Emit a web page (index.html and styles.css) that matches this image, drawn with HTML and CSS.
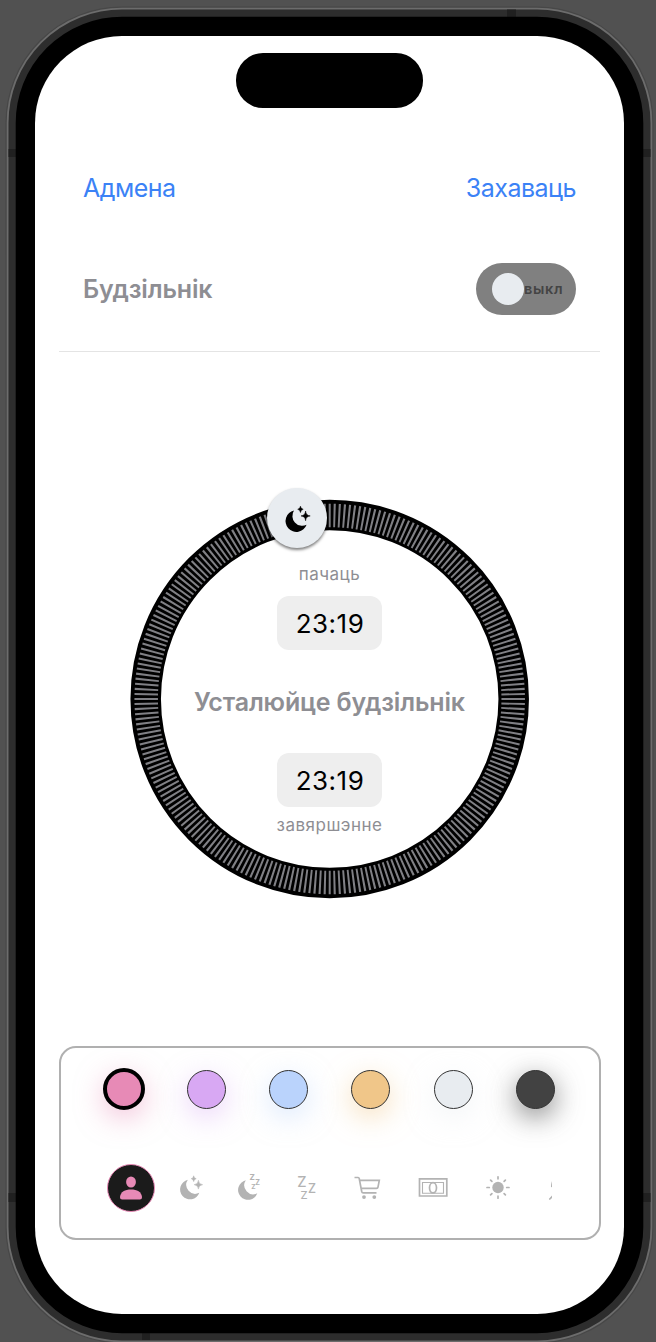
FILE: index.html
```html
<!DOCTYPE html>
<html lang="be">
<head>
<meta charset="utf-8">
<title>Будзільнік</title>
<link rel="stylesheet" href="styles.css">
</head>
<body>
<svg class="device" viewBox="0 0 656 1342" aria-hidden="true">
  <defs>
    <rect id="frame" x="35" y="36" width="589" height="1278" rx="87"/>
  </defs>
  <use href="#frame" stroke="#474747" stroke-width="59"/>
  <use href="#frame" stroke="#6c6c6c" stroke-width="56.600"/>
  <use href="#frame" stroke="#2d2d2d" stroke-width="53"/>
  <path fill="#202020" d="M8.500 149h8v8h-8zM8.500 1193h8v9h-8zM642 149h8.500v8H642zM642 1193h8.500v9H642zM507 9.500h9v8h-9zM142 1331h8v9h-8z"/>
  <use href="#frame" stroke="#000" stroke-width="38.600"/>
  <use href="#frame" fill="#fff"/>
</svg>

<main class="screen">
  <div class="island"></div>
  <header class="nav">
    <a class="nav-cancel">Адмена</a>
    <a class="nav-save">Захаваць</a>
  </header>
  <section class="alarm">
    <h1 class="alarm-title">Будзільнік</h1>
    <div class="toggle"><span class="toggle-knob"></span><span class="toggle-text">выкл</span></div>
  </section>

  <section class="dial">
    <svg class="ring" viewBox="-199 -199 398 398" aria-hidden="true">
      <circle cx="-.3" r="184" fill="none" stroke="#000" stroke-width="30.500"/>
      <circle cx="-.3" r="183.500" fill="none" stroke="#808085" stroke-width="23.500" pathLength="240" stroke-dasharray=".42 .58" stroke-dashoffset=".21"/>
    </svg>
    <div class="handle">
      <svg viewBox="-16 -16 32 32" width="35" height="35"><use href="#moon-stars"/></svg>
    </div>
    <div class="dial-content">
      <span class="caption caption-start">пачаць</span>
      <span class="time">23:19</span>
      <span class="prompt">Усталюйце будзільнік</span>
      <span class="time">23:19</span>
      <span class="caption caption-end">завяршэнне</span>
    </div>
  </section>

  <section class="panel">
    <div class="swatches">
      <span class="swatch pink selected"></span>
      <span class="swatch purple"></span>
      <span class="swatch blue"></span>
      <span class="swatch orange"></span>
      <span class="swatch light"></span>
      <span class="swatch dark"></span>
    </div>
    <div class="icons">
      <span class="icon person"><svg viewBox="-16 -16 32 32"><ellipse cy="-6" rx="4.900" ry="5.600"/><path d="M-11 9C-10.500 4-6 1.600 0 1.600S10.500 4 11 9c0 1.700-.8 2.500-2.200 2.500H-8.800C-10.200 11.500-11 10.700-11 9z"/></svg></span>
      <span class="icon w60"><svg viewBox="-16 -16 32 32"><g id="moon-stars"><path d="M-3.200-8.200A9.900 9.900 0 1 0 8.300 4.800A9 9 0 0 1-3.200-8.200z"/><path d="M2.700-12.200Q3-9.600 5.200-9.300Q3-9 2.700-6.400Q2.400-9 .2-9.300Q2.400-9.600 2.700-12.200zM7.400-7.700Q7.700-3.600 11.600-3.300Q7.700-3 7.400 1.100Q7.100-3 3.200-3.300Q7.100-3.600 7.400-7.700z" stroke="currentColor" stroke-width=".5"/></g></svg></span>
      <span class="icon w56"><svg viewBox="-16 -16 32 32"><path d="M-3.200-7.700A9.900 9.900 0 1 0 8.300 5.300A9 9 0 0 1-3.200-7.700z"/><g class="zed"><text x=".6" y="-7.700" font-size="8">Z</text><text x="6.300" y="-3" font-size="7">Z</text><text x="2.300" y=".9" font-size="6.500">Z</text></g></svg></span>
      <span class="icon w60"><svg viewBox="-16 -16 32 32"><g class="zed zed-large"><text x="-9.700" y="-1.300" font-size="14.500">Z</text><text x="1" y="4.700" font-size="12.500">Z</text><text x="-6.600" y="11" font-size="11">Z</text></g></svg></span>
      <span class="icon w62"><svg viewBox="-16 -16 32 32"><g class="line"><path d="M-13.500-10.500h3.600q.9 0 1.100.9L-6.300 3.500q.3 1.300 1.500 1.300H8.500M-8.200-7.600H11.300L10-.8Q9.800.4 8.500.4H-6.900"/></g><circle cx="-4" cy="9.100" r="1.900"/><circle cx="6.300" cy="9.100" r="1.900"/></svg></span>
      <span class="icon w68"><svg viewBox="-16 -16 32 32"><g class="line"><path d="M-13.500-9.200h27.300V8h-27.300z"/><path stroke-width="1.100" d="M-10.500-5.500h21V5.200h-21z"/><ellipse cy="-.2" rx="3.500" ry="5.100"/></g></svg></span>
      <span class="icon w62"><svg viewBox="-16 -16 32 32"><circle cy="-.5" r="5.700"/><path class="line" stroke-linecap="round" d="M0-9.200v-2M0 8.200v2M-8.700-.5h-2.300M8.700-.5H11M-6.100-6.600l-1.300-1.300M6.100-6.600l1.300-1.300M-6.100 5.600l-1.300 1.300M6.100 5.600l1.300 1.300"/></svg></span>
      <span class="icon sunrise"><svg viewBox="-16 -16 32 32"><path class="line" stroke-linecap="round" d="M11.800-1.500Q11.900-4 12.600-6M9.800 11l3-3.200"/></svg></span>
    </div>
  </section>
</main>
</body>
</html>
```
FILE: styles.css
```css
* { box-sizing: border-box; }
body {
  display: flex;
  margin: 0;
  width: 656px;
  height: 1342px;
  overflow: hidden;
  position: relative;
  background: #515151;
  font-family: Inter, "Noto Sans", sans-serif;
}
svg { overflow: visible; }
.device { position: absolute; inset: 0; width: 656px; height: 1342px; fill: none; }
.screen {
  position: relative;
  width: 589px;
  height: 1278px;
  margin: 36px 0 0 35px;
  padding: 17px 24px 0;
  display: flex;
  flex-direction: column;
}
.island { width: 187px; height: 55px; margin: 0 0 0 177px; background: #000; border-radius: 27px; }
.nav {
  display: flex;
  justify-content: space-between;
  align-items: center;
  height: 40px;
  margin-top: 60px;
  padding: 0 24px;
  font-size: 25px;
  letter-spacing: -.5px;
  color: #3b82f6;
}
.alarm {
  display: flex;
  justify-content: space-between;
  align-items: center;
  height: 125px;
  margin-top: 19px;
  padding: 0 24px 1px;
  border-bottom: 1.500px solid #e4e4e4;
}
.alarm-title { margin: 0; padding-top: 1px; font-size: 25px; font-weight: 600; letter-spacing: -.15px; color: #8e8e93; }
.toggle {
  display: flex;
  align-items: center;
  width: 100px;
  height: 52px;
  padding-left: 16px;
  border-radius: 26px;
  background: #808080;
}
.toggle-knob { width: 32px; height: 32px; border-radius: 50%; background: #e8ecf0; }
.toggle-text { font-size: 14.500px; font-weight: 600; letter-spacing: .7px; color: #444; }
.dial { position: relative; width: 398px; height: 398px; margin: 148px 0 0 71.500px; }
.ring { display: block; width: 398px; height: 398px; }
.handle {
  position: absolute;
  left: 136.500px;
  top: -12px;
  width: 60px;
  height: 60px;
  display: grid;
  place-items: center;
  border-radius: 50%;
  background: #e8ecf0;
  color: #000;
  box-shadow: 0 2px 3px rgba(0, 0, 0, .5);
}
.handle svg { margin-top: 2px; fill: currentColor; }
.dial-content {
  position: absolute;
  inset: 0;
  display: flex;
  flex-direction: column;
  align-items: center;
  padding-top: 64px;
}
.caption { font-size: 17px; line-height: 20px; color: #8e8e93; letter-spacing: .5px; }
.caption-start { margin-bottom: 12px; }
.caption-end { margin-top: 8px; }
.time {
  width: 105px;
  height: 54px;
  padding-top: 1px;
  border-radius: 12px;
  background: #eee;
  text-align: center;
  font-size: 26px;
  letter-spacing: .5px;
  text-indent: 1px;
  line-height: 54px;
  color: #000;
}
.prompt {
  height: 103px;
  padding-top: 1px;
  line-height: 103px;
  font-size: 25px;
  font-weight: 600;
  letter-spacing: -.15px;
  color: #8e8e93;
  white-space: nowrap;
}
.panel {
  width: 542px;
  height: 194px;
  margin-top: 148px;
  border: 2px solid #b0b0b0;
  border-radius: 17px;
}
.swatches { display: flex; justify-content: space-between; align-items: center; height: 42px; margin: 20px 44px 0 42px; }
.swatch { width: 39px; height: 39px; border-radius: 50%; border: 1px solid #333; background: var(--c); box-shadow: 0 8px 28px var(--s); }
.selected { width: 42px; height: 42px; margin-right: -1.500px; border: 4.500px solid #000; }
.pink { --c: #e78ab6; --s: rgba(231, 138, 182, .5); }
.purple { --c: #d8a8f3; --s: rgba(216, 168, 243, .5); }
.blue { --c: #bad3fc; --s: rgba(186, 211, 252, .5); }
.orange { --c: #f0c689; --s: rgba(240, 198, 137, .55); }
.light { --c: #e8ecf0; --s: rgba(232, 236, 240, .5); }
.dark { --c: #424242; --s: rgba(66, 66, 66, .65); }
.icons { display: flex; align-items: center; height: 49px; margin: 53px 47px 0 46px; overflow: hidden; color: #b3b3b3; }
.icon { flex: none; display: flex; justify-content: center; align-items: center; height: 48px; }
.icon svg { width: 32px; height: 32px; fill: currentColor; flex: none; }
.person { width: 48px; margin: 0 6px 0 0; border: 1.500px solid #e78ab6; border-radius: 50%; background: #1b1b1b; color: #e78ab6; }
.w56 { width: 56px; }
.w60 { width: 60px; }
.w62 { width: 62px; }
.w68 { width: 68px; }
.sunrise { width: 21px; }
.line { fill: none; stroke: currentColor; stroke-width: 1.700; }
.icon svg .line { fill: none; }
.zed { font-family: Inter, sans-serif; font-weight: 700; }
.zed-large { font-weight: 500; }
```
